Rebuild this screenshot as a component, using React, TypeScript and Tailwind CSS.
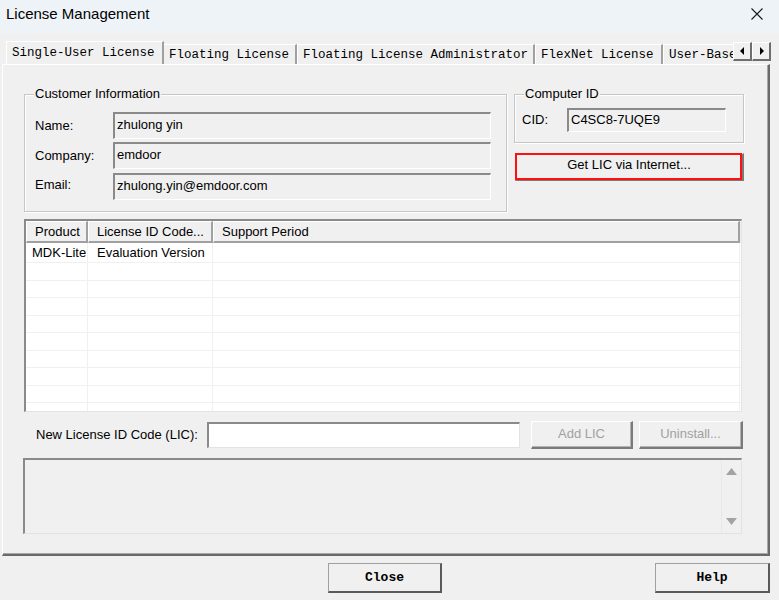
import React from 'react'

const tabs = [
  { label: 'Single-User License', w: 'w-[158px]', active: true },
  { label: 'Floating License', w: 'w-[134px]', active: false },
  { label: 'Floating License Administrator', w: 'w-[238px]', active: false },
  { label: 'FlexNet License', w: 'w-[128px]', active: false },
  { label: 'User-Based License', w: 'w-[160px]', active: false },
]

const customer = [
  { label: 'Name:', value: 'zhulong yin' },
  { label: 'Company:', value: 'emdoor' },
  { label: 'Email:', value: 'zhulong.yin@emdoor.com' },
]

const rows = [
  { product: 'MDK-Lite', code: 'Evaluation Version', period: '' },
  ...Array.from({ length: 9 }, () => ({ product: '', code: '', period: '' })),
]

function GroupBox({ title, className, children }: { title: string; className?: string; children: React.ReactNode }) {
  return (
    <div className={`relative shrink-0 border border-[#c6c6c6] shadow-[inset_1px_1px_0_#ffffff,1px_1px_0_#ffffff] ${className ?? ''}`}>
      <span className="absolute left-[9px] -top-[9px] px-[1px] bg-[#f0f0f0] leading-[16px]">{title}</span>
      {children}
    </div>
  )
}

function ReadOnlyField({ value, className }: { value: string; className?: string }) {
  return (
    <div
      className={`shrink-0 flex items-center pl-[2px] bg-[#f0f0f0] border-t-2 border-l-2 border-b border-r border-t-[#8a8a8a] border-l-[#8a8a8a] border-b-white border-r-white ${className ?? ''}`}
    >
      <span className="-mt-[2px]">{value}</span>
    </div>
  )
}

function RaisedButton({ children, className, disabled }: { children: React.ReactNode; className?: string; disabled?: boolean }) {
  return (
    <button
      className={`shrink-0 flex items-center justify-center bg-[#f0f0f0] border-t border-l border-t-white border-l-white border-r-2 border-b-2 border-r-[#7a7a7a] border-b-[#7a7a7a] shadow-[inset_-1px_-1px_0_#b4b4b4] ${disabled ? 'text-[#a0a0a0]' : 'text-black'} ${className ?? ''}`}
    >
      {children}
    </button>
  )
}

export default function App() {
  return (
    <div className="w-[779px] h-[600px] bg-[#f0f0f0] flex flex-col overflow-hidden font-['Liberation_Sans',Arial,sans-serif] text-[13px] text-black">
      {/* Title bar */}
      <div className="h-[33px] shrink-0 bg-[#eef3f8] flex items-center justify-between pl-[6px] pr-[16px]">
        <span className="text-[15px] -mt-[5px]">License Management</span>
        <svg width="12" height="12" viewBox="0 0 12 12" className="-mt-[5px]">
          <path d="M0.5 0.5 L11.5 11.5 M11.5 0.5 L0.5 11.5" stroke="#1a1a1a" strokeWidth="1.1" />
        </svg>
      </div>

      {/* Tab strip */}
      <div className="mt-[8px] h-[23px] shrink-0 flex pl-[6px] font-['Liberation_Mono',monospace] text-[12.5px]">
        <div className="w-[727px] flex items-end overflow-hidden">
          {tabs.map((t) => (
            <div
              key={t.label}
              className={`${t.w} shrink-0 flex items-center pl-[5px] whitespace-nowrap border-l border-t border-l-white border-t-white border-r-2 border-r-[#a0a0a0] ${
                t.active ? 'h-[23px] -mr-[1px] z-10 bg-[#f0f0f0]' : 'h-[20px] pt-[1px]'
              }`}
            >
              {t.label}
            </div>
          ))}
        </div>
        <div className="flex self-start mt-[1px]">
          {['M6 2 L6 10 L2 6 Z', 'M3 2 L3 10 L7 6 Z'].map((d) => (
            <div
              key={d}
              className="w-[19px] h-[19px] flex items-center justify-center bg-[#f0f0f0] border-t border-l border-white border-r-2 border-b-2 border-r-[#6e6e6e] border-b-[#6e6e6e]"
            >
              <svg width="9" height="12" viewBox="0 0 9 12">
                <path d={d} fill="#000" />
              </svg>
            </div>
          ))}
        </div>
      </div>

      {/* Tab panel */}
      <div className="ml-[2px] w-[768px] h-[492px] shrink-0 border-l border-t border-l-white border-t-white border-r-2 border-b-2 border-r-[#6a6a6a] border-b-[#6a6a6a] shadow-[inset_-1px_-1px_0_#a8a8a8] pl-[21px] pt-[29px]">
        <div className="flex items-start gap-[7px]">
          <GroupBox title="Customer Information" className="w-[483px] h-[118px]">
            <div className="flex flex-col pl-[10px] pt-[17px] gap-[3px]">
              {customer.map((c, i) => (
                <div key={c.label} className={`flex items-center ${i === 2 ? 'mt-[1px]' : ''}`}>
                  <span className={`w-[78px] shrink-0 ${i === 2 ? '-mt-[4px]' : ''}`}>{c.label}</span>
                  <ReadOnlyField value={c.value} className="w-[378px] h-[27px]" />
                </div>
              ))}
            </div>
          </GroupBox>

          <div className="flex flex-col w-[230px] shrink-0">
            <GroupBox title="Computer ID" className="h-[49px]">
              <div className="flex items-center pl-[7px] pt-[13px]">
                <span className="w-[45px] shrink-0">CID:</span>
                <ReadOnlyField value="C4SC8-7UQE9" className="w-[159px] h-[24px]" />
              </div>
            </GroupBox>
            <div className="relative mt-[10px] ml-[1px] w-[229px] h-[28px]">
              <RaisedButton className="w-full h-full">
                <span className="-mt-[3px]">Get LIC via Internet...</span>
              </RaisedButton>
              <div className="absolute left-0 top-0 w-[227px] h-[27px] border-2 border-[#ff1010] pointer-events-none" />
            </div>
          </div>
        </div>

        {/* License list */}
        <div className="mt-[7px] w-[718px] h-[193px] bg-white border-t-2 border-l-2 border-t-[#8a8a8a] border-l-[#8a8a8a] border-r border-b border-r-[#e3e3e3] border-b-[#e3e3e3] overflow-hidden">
          <div className="flex h-[22px] bg-[#f0f0f0]">
            {[
              { t: 'Product', w: 'w-[62px]' },
              { t: 'License ID Code...', w: 'w-[125px]' },
              { t: 'Support Period', w: 'w-[527px]' },
            ].map((h) => (
              <div
                key={h.t}
                className={`${h.w} shrink-0 flex items-center pl-[8px] pt-[1px] border-t border-l border-t-white border-l-white border-r-2 border-b-2 border-r-[#a0a0a0] border-b-[#a0a0a0]`}
              >
                {h.t}
              </div>
            ))}
          </div>
          {rows.map((r, i) => (
            <div
              key={i}
              className={`flex border-b border-[#f0f0f0] ${i === 0 ? 'h-[20px]' : i % 2 === 1 ? 'h-[18px]' : 'h-[17px]'}`}
            >
              <div className="w-[62px] shrink-0 flex items-center pl-[6px] border-r border-[#f0f0f0]">{r.product}</div>
              <div className="w-[125px] shrink-0 flex items-center pl-[9px] border-r border-[#f0f0f0]">{r.code}</div>
              <div className="w-[527px] shrink-0 flex items-center pl-[9px] border-r border-[#f0f0f0]">{r.period}</div>
            </div>
          ))}
        </div>

        {/* New LIC row */}
        <div className="mt-[9px] flex items-center">
          <span className="ml-[12px] w-[171px] shrink-0">New License ID Code (LIC):</span>
          <div className="shrink-0 w-[313px] h-[26px] bg-white border-t-2 border-l-2 border-t-[#8a8a8a] border-l-[#8a8a8a] border-b border-r border-b-[#e3e3e3] border-r-[#e3e3e3]" />
          <RaisedButton disabled className="ml-[11px] w-[102px] h-[28px]">
            <span className="-mt-[2px]">Add LIC</span>
          </RaisedButton>
          <RaisedButton disabled className="ml-[6px] w-[104px] h-[28px]">
            <span className="-mt-[2px]">Uninstall...</span>
          </RaisedButton>
        </div>

        {/* Message box */}
        <div className="mt-[9px] -ml-[1px] w-[719px] h-[76px] flex justify-end bg-[#f0f0f0] border-t-2 border-l-2 border-t-[#8a8a8a] border-l-[#8a8a8a] border-b border-r border-b-[#e3e3e3] border-r-[#e3e3e3]">
          <div className="w-[20px] flex flex-col items-center justify-between pt-[8px] pb-[8px] border-l border-[#e8e8e8]">
            <svg width="11" height="7" viewBox="0 0 11 7">
              <path d="M5.5 0 L11 7 L0 7 Z" fill="#a3a3a3" />
            </svg>
            <svg width="11" height="7" viewBox="0 0 11 7">
              <path d="M0 0 L11 0 L5.5 7 Z" fill="#a3a3a3" />
            </svg>
          </div>
        </div>
      </div>

      {/* Dialog buttons */}
      <div className="flex mt-[7px] font-['Liberation_Mono',monospace] text-[13px]">
        <button className="ml-[328px] w-[114px] h-[30px] flex items-center justify-center border-t border-l border-t-[#a0a0a0] border-l-[#a0a0a0] border-r-2 border-b-2 border-r-[#5a5a5a] border-b-[#5a5a5a] bg-[#f0f0f0] font-semibold">
          Close
        </button>
        <button className="ml-auto mr-[9px] w-[115px] h-[30px] flex items-center justify-center border-t border-l border-t-[#a0a0a0] border-l-[#a0a0a0] border-r-2 border-b-2 border-r-[#5a5a5a] border-b-[#5a5a5a] bg-[#f0f0f0] font-semibold">
          Help
        </button>
      </div>
    </div>
  )
}
